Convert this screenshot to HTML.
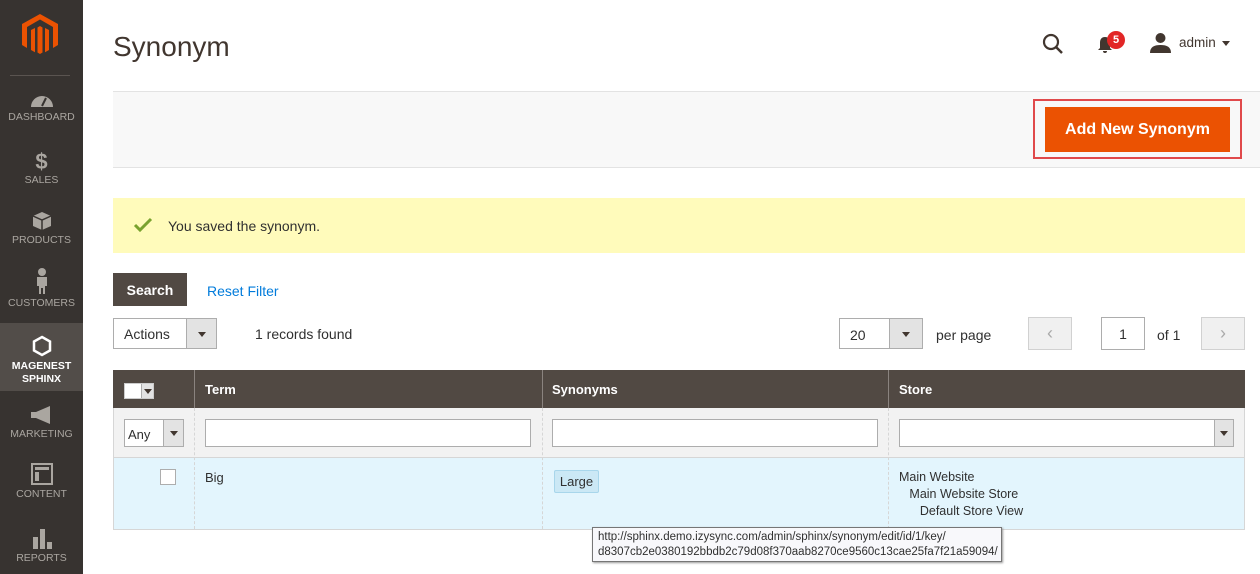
<!DOCTYPE html>
<html><head><meta charset="utf-8"><style>
*{box-sizing:border-box;margin:0;padding:0}
body{width:1260px;height:574px;overflow:hidden;background:#fff;font-family:"Liberation Sans",sans-serif;color:#303030;position:relative;font-size:14px}
.a{position:absolute}
#sb{left:0;top:0;width:83px;height:574px;background:#373330}
.ni{position:absolute;left:0;width:83px;text-align:center;color:#aaa6a0;font-size:10.5px}
.ni svg{display:block;margin:0 auto 3px}
.sel{border:1px solid #adadad;background:#fff}
.arr{position:absolute;right:0;top:0;bottom:0;background:#e3e3e3;border-left:1px solid #adadad}
.arr:after{content:"";position:absolute;left:50%;top:50%;margin:-2px 0 0 -4px;border:4px solid transparent;border-top:5px solid #41362f;border-bottom:0}
.th{color:#fff;font-weight:bold;font-size:13px;top:382px}
.inp{background:#fff;border:1px solid #adadad;height:28px;top:419px}
.vd{border-left:1px dashed #d6d6d6;top:408px;height:121px}
</style></head><body>
<div id="sb" class="a">
 <svg class="a" style="left:22px;top:14px" width="36" height="40" viewBox="0 0 36 40"><path d="M18 0L0 10v21l5 3V13L18 5.5 31 13v21l5-3V10z M15.5 13.5v25l2.5 1.5 2.5-1.5v-25l-2.5-1.5z M9 16v20l4 2.3V14z M27 16v20l-4 2.3V14z" fill="#eb5202"/></svg>
 <div class="a" style="left:10px;top:75px;width:60px;height:1px;background:#5a5450"></div>
 <div class="ni" style="top:92px"><svg width="24" height="16" viewBox="0 0 24 16"><path d="M1 15A11 11 0 0 1 23 15z" fill="#aaa6a0"/><path d="M12 14l4-8" stroke="#373330" stroke-width="2"/></svg>DASHBOARD</div>
 <div class="ni" style="top:150px"><div style="font-size:22px;font-weight:bold;line-height:24px">$</div>SALES</div>
 <div class="ni" style="top:211px"><svg width="20" height="20" viewBox="0 0 20 20"><path d="M10 1L19 5v10l-9 4-9-4V5z" fill="#aaa6a0"/><path d="M1 5l9 4 9-4M10 9v10" stroke="#373330" stroke-width="1.5" fill="none"/></svg>PRODUCTS</div>
 <div class="ni" style="top:268px"><svg width="12" height="26" viewBox="0 0 12 26"><circle cx="6" cy="4" r="4" fill="#aaa6a0"/><path d="M1 9h10v9h-2v8H7v-6H5v6H3v-8H1z" fill="#aaa6a0"/></svg>CUSTOMERS</div>
 <div class="a" style="left:0;top:323px;width:83px;height:68px;background:#524d49"></div>
 <div class="ni" style="top:335px;color:#fff;font-weight:bold;line-height:13px"><svg width="20" height="22" viewBox="0 0 20 22"><path d="M10 2L18 6.5v9L10 20 2 15.5v-9z" fill="none" stroke="#fff" stroke-width="2.5"/></svg>MAGENEST<br>SPHINX</div>
 <div class="ni" style="top:405px"><svg width="26" height="20" viewBox="0 0 26 20"><path d="M2 7h5l14-6v18L7 13H2z" fill="#aaa6a0"/></svg>MARKETING</div>
 <div class="ni" style="top:463px"><svg width="22" height="22" viewBox="0 0 22 22"><rect x="1" y="1" width="20" height="20" fill="none" stroke="#aaa6a0" stroke-width="2"/><rect x="4" y="4" width="14" height="3" fill="#aaa6a0"/><rect x="4" y="9" width="4" height="9" fill="#aaa6a0"/></svg>CONTENT</div>
 <div class="ni" style="top:527px"><svg width="22" height="22" viewBox="0 0 22 22"><rect x="2" y="10" width="5" height="12" fill="#aaa6a0"/><rect x="9" y="2" width="5" height="20" fill="#aaa6a0"/><rect x="16" y="15" width="5" height="7" fill="#aaa6a0"/></svg>REPORTS</div>
</div>
<div class="a" style="left:113px;top:31px;font-size:28px;color:#41362f">Synonym</div>
<svg class="a" style="left:1042px;top:33px" width="22" height="22" viewBox="0 0 22 22"><circle cx="9" cy="9" r="7" fill="none" stroke="#41362f" stroke-width="2.2"/><path d="M14 14l6 6" stroke="#41362f" stroke-width="2.5"/></svg>
<svg class="a" style="left:1096px;top:36px" width="18" height="18" viewBox="0 0 18 18"><path d="M9 1c4 0 5 3 5 6v5l2 2H2l2-2V7c0-3 1-6 5-6z M7 15h4a2 2 0 0 1-4 0z" fill="#41362f"/></svg>
<div class="a" style="left:1107px;top:31px;width:18px;height:18px;border-radius:9px;background:#e22626;color:#fff;font-size:11px;font-weight:bold;text-align:center;line-height:18px">5</div>
<svg class="a" style="left:1150px;top:32px" width="21" height="21" viewBox="0 0 21 21"><circle cx="10.5" cy="6" r="5" fill="#41362f"/><path d="M0 21c0-6 4-8 10.5-8S21 15 21 21z" fill="#41362f"/></svg>
<div class="a" style="left:1179px;top:35px;font-size:13.5px;color:#41362f">admin</div>
<div class="a" style="left:1222px;top:41px;border:4px solid transparent;border-top:5px solid #41362f"></div>
<div class="a" style="left:113px;top:91px;width:1147px;height:77px;background:#f8f8f8;border-top:1px solid #e3e3e3;border-bottom:1px solid #e3e3e3"></div>
<div class="a" style="left:1033px;top:99px;width:209px;height:60px;border:2px solid #e0494b"></div>
<div class="a" style="left:1045px;top:107px;width:185px;height:45px;background:#eb5202;color:#fff;font-weight:bold;font-size:16px;text-align:center;line-height:46px">Add New Synonym</div>
<div class="a" style="left:113px;top:198px;width:1132px;height:55px;background:#fffbbb"></div>
<svg class="a" style="left:133px;top:217px" width="20" height="16" viewBox="0 0 20 16"><path d="M2 8l5 5L18 2" fill="none" stroke="#79a22e" stroke-width="3"/></svg>
<div class="a" style="left:168px;top:218px;font-size:14px;color:#303030">You saved the synonym.</div>
<div class="a" style="left:113px;top:273px;width:74px;height:33px;background:#514943;color:#fff;font-weight:bold;text-align:center;line-height:34px">Search</div>
<div class="a" style="left:207px;top:283px;color:#007bdb">Reset Filter</div>
<div class="a sel" style="left:113px;top:318px;width:104px;height:31px"><span class="a" style="left:10px;top:7px">Actions</span><div class="arr" style="width:30px"></div></div>
<div class="a" style="left:255px;top:326px">1 records found</div>
<div class="a sel" style="left:839px;top:318px;width:84px;height:31px"><span class="a" style="left:10px;top:8px">20</span><div class="arr" style="width:33px"></div></div>
<div class="a" style="left:936px;top:327px">per page</div>
<div class="a" style="left:1028px;top:317px;width:44px;height:33px;background:#f0f0f0;border:1px solid #d1d1d1;color:#aaa;text-align:center;line-height:30px;font-size:18px">&lsaquo;</div>
<div class="a sel" style="left:1101px;top:317px;width:44px;height:33px;text-align:center;line-height:32px">1</div>
<div class="a" style="left:1157px;top:327px">of 1</div>
<div class="a" style="left:1201px;top:317px;width:44px;height:33px;background:#f0f0f0;border:1px solid #d1d1d1;color:#aaa;text-align:center;line-height:30px;font-size:18px">&rsaquo;</div>
<div class="a" style="left:113px;top:370px;width:1132px;height:38px;background:#514943"></div>
<div class="a" style="left:194px;top:370px;width:1px;height:38px;background:#8a837f"></div>
<div class="a" style="left:542px;top:370px;width:1px;height:38px;background:#8a837f"></div>
<div class="a" style="left:888px;top:370px;width:1px;height:38px;background:#8a837f"></div>
<div class="a" style="left:124px;top:383px;width:30px;height:16px;background:#fff;border:1px solid #ccc"><div class="arr" style="width:12px;background:#e3e3e3"></div></div>
<div class="a th" style="left:205px">Term</div><div class="a th" style="left:552px">Synonyms</div><div class="a th" style="left:899px">Store</div>
<div class="a" style="left:113px;top:408px;width:1132px;height:49px;background:#f2f2f2;border-left:1px solid #d6d6d6;border-right:1px solid #d6d6d6"></div>
<div class="a" style="left:113px;top:457px;width:1132px;height:73px;background:#e3f5fd;border:1px solid #d6d6d6"></div>
<div class="a vd" style="left:194px"></div><div class="a vd" style="left:542px"></div><div class="a vd" style="left:888px"></div>
<div class="a sel" style="left:124px;top:419px;width:60px;height:28px;font-size:13px"><span class="a" style="left:3px;top:7px">Any</span><div class="arr" style="width:20px"></div></div>
<div class="a inp" style="left:205px;width:326px"></div>
<div class="a inp" style="left:552px;width:326px"></div>
<div class="a inp" style="left:899px;width:335px"><div class="arr" style="width:19px"></div></div>
<div class="a" style="left:160px;top:469px;width:16px;height:16px;background:#fff;border:1px solid #adadad"></div>
<div class="a" style="left:205px;top:470px;font-size:13px">Big</div>
<div class="a" style="left:554px;top:470px;width:45px;height:23px;background:#cbe8f5;border:1px solid #a8d6eb;border-radius:2px;font-size:13px;text-align:center;line-height:22px">Large</div>
<div class="a" style="left:899px;top:469px;font-size:12.5px;line-height:17px">Main Website<br>&nbsp;&nbsp;&nbsp;Main Website Store<br>&nbsp;&nbsp;&nbsp;&nbsp;&nbsp;&nbsp;Default Store View</div>
<div class="a" style="left:592px;top:527px;width:410px;height:35px;background:#f8f8fb;border:1px solid #767676;box-shadow:1px 1px 2px #999;font-size:11.5px;padding:2px 5px;line-height:15px;white-space:nowrap">http://sphinx.demo.izysync.com/admin/sphinx/synonym/edit/id/1/key/<br>d8307cb2e0380192bbdb2c79d08f370aab8270ce9560c13cae25fa7f21a59094/</div>
</body></html>
